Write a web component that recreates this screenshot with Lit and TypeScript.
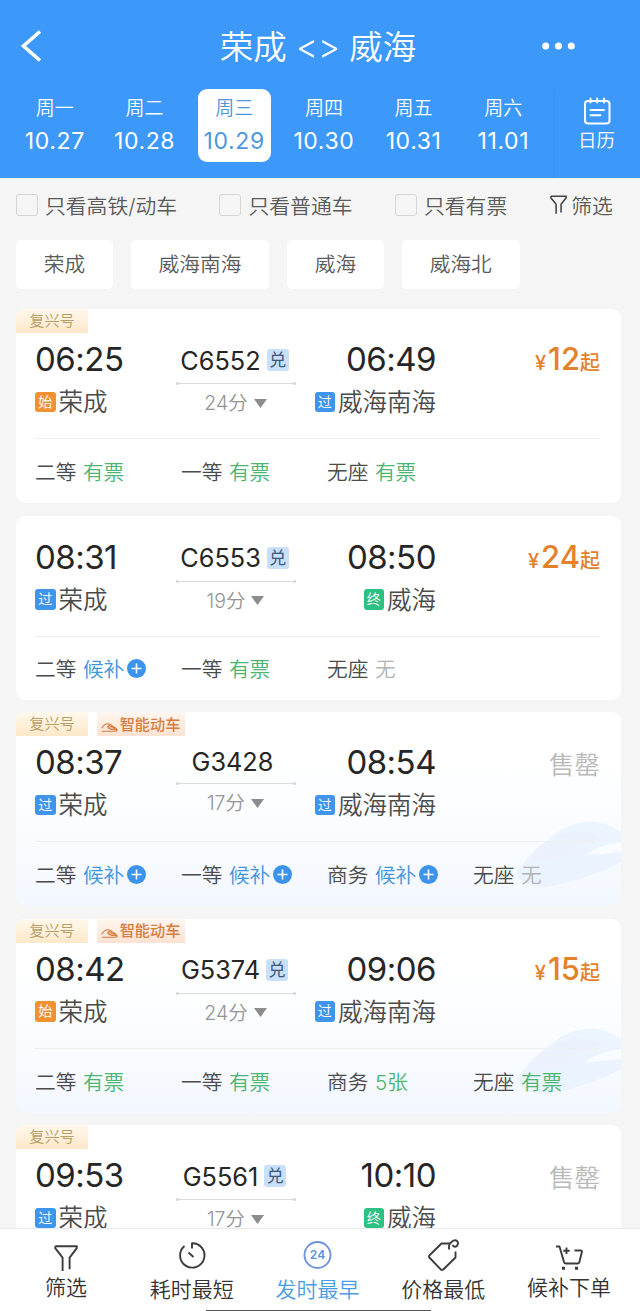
import { LitElement, css, html, svg, nothing } from "lit";
import { customElement, property, state } from "lit/decorators.js";
import { classMap } from "lit/directives/class-map.js";

interface Seat {
  name: string;
  left: string;
}

interface Train {
  no: string;
  tags: string[];
  exchange: boolean;
  depart: string;
  from: string;
  fromMark: string;
  arrive: string;
  to: string;
  toMark: string;
  minutes: number;
  price?: number;
  seats: Seat[];
}

const DAYS = [
  ["周一", "10.27"],
  ["周二", "10.28"],
  ["周三", "10.29"],
  ["周四", "10.30"],
  ["周五", "10.31"],
  ["周六", "11.01"],
];

const STATIONS = ["荣成", "威海南海", "威海", "威海北"];

const TRAINS: Train[] = [
  {
    no: "C6552", tags: ["复兴号"], exchange: true,
    depart: "06:25", from: "荣成", fromMark: "始",
    arrive: "06:49", to: "威海南海", toMark: "过",
    minutes: 24, price: 12,
    seats: [
      { name: "二等", left: "有票" },
      { name: "一等", left: "有票" },
      { name: "无座", left: "有票" },
    ],
  },
  {
    no: "C6553", tags: [], exchange: true,
    depart: "08:31", from: "荣成", fromMark: "过",
    arrive: "08:50", to: "威海", toMark: "终",
    minutes: 19, price: 24,
    seats: [
      { name: "二等", left: "候补" },
      { name: "一等", left: "有票" },
      { name: "无座", left: "无" },
    ],
  },
  {
    no: "G3428", tags: ["复兴号", "智能动车"], exchange: false,
    depart: "08:37", from: "荣成", fromMark: "过",
    arrive: "08:54", to: "威海南海", toMark: "过",
    minutes: 17,
    seats: [
      { name: "二等", left: "候补" },
      { name: "一等", left: "候补" },
      { name: "商务", left: "候补" },
      { name: "无座", left: "无" },
    ],
  },
  {
    no: "G5374", tags: ["复兴号", "智能动车"], exchange: true,
    depart: "08:42", from: "荣成", fromMark: "始",
    arrive: "09:06", to: "威海南海", toMark: "过",
    minutes: 24, price: 15,
    seats: [
      { name: "二等", left: "有票" },
      { name: "一等", left: "有票" },
      { name: "商务", left: "5张" },
      { name: "无座", left: "有票" },
    ],
  },
  {
    no: "G5561", tags: ["复兴号"], exchange: true,
    depart: "09:53", from: "荣成", fromMark: "过",
    arrive: "10:10", to: "威海", toMark: "终",
    minutes: 17,
    seats: [],
  },
];

const funnel = svg`<path d="M1.2 1.2H22.8V3.2L15.6 12.6V24.2M1.2 1.2V3.2L8.6 12.6V26" />`;

@customElement("date-strip")
export class DateStrip extends LitElement {
  static styles = css`
    :host {
      display: flex;
      align-items: center;
      padding-left: 10px;
      height: 73px;
      color: #fff;
    }

    .day {
      display: flex;
      justify-content: center;
      width: 89.7px;
    }

    .box {
      display: flex;
      flex-direction: column;
      align-items: center;
      width: 73px;
      height: 73px;
      border-radius: 9px;
    }

    .box.active {
      background: #fff;
      color: #4d97dc;
    }

    .week {
      margin-top: 5px;
      font-size: 19px;
      line-height: 30px;
    }

    .date {
      font-size: 23px;
      font-weight: 400;
      line-height: 34px;
      letter-spacing: 0.6px;
    }

    .calendar {
      display: flex;
      flex: 1;
      flex-direction: column;
      align-items: center;
      margin-left: 5px;
      height: 89px;
      margin-top: 16px;
      background: linear-gradient(90deg, #3994f5, #3c98f9 4px);
    }

    .calendar svg {
      margin-top: 8px;
    }

    .calendar span {
      font-size: 18.5px;
      line-height: 28px;
      margin-top: 1px;
    }
  `;

  @state() selected = 2;

  render() {
    return html`
      ${DAYS.map(
        ([week, date], i) => html`<div class="day" @click=${() => (this.selected = i)}>
          <div class=${classMap({ box: true, active: i === this.selected })}>
            <span class="week">${week}</span>
            <span class="date">${date}</span>
          </div>
        </div>`
      )}
      <div class="calendar">
        <svg width="28" height="28" viewBox="0 0 28 28" fill="none" stroke="#fff" stroke-width="2" stroke-linecap="round">
          <rect x="2" y="4" width="24.500" height="22.500" rx="3" />
          <path d="M7.500 1.500V5.500M14.200 1.500V5.500M21 1.500V5.500M7.500 13H21M7.500 18.300H17.500" />
        </svg>
        <span>日历</span>
      </div>
    `;
  }
}

@customElement("train-card")
export class TrainCard extends LitElement {
  static styles = css`
    :host {
      display: block;
      flex: none;
    }

    .card {
      position: relative;
      overflow: hidden;
      border-radius: 9px;
      background: #fff;
      color: #4b4b4b;
    }

    .card.smart {
      background: linear-gradient(180deg, #fff 25%, #f9fcff 65%, #f3f7ff);
    }

    .card.plain {
      padding-top: 21px;
    }

    .shade {
      position: absolute;
      right: 0;
      bottom: 14px;
    }

    .tags {
      display: flex;
      gap: 8.5px;
      height: 24px;
      margin-bottom: 6px;
      font-size: 15.2px;
      line-height: 23px;
    }

    .tag {
      width: 72px;
      text-align: center;
      color: #b89c66;
      background: linear-gradient(180deg, #fff8ec, #fde8c9);
    }

    .tag.ai {
      display: flex;
      align-items: center;
      justify-content: center;
      gap: 2px;
      width: 88px;
      font-weight: 500;
      color: #d67c3e;
      background: linear-gradient(180deg, #fff6ef, #fce2d2);
    }

    .tag.ai svg {
      margin-top: 6px;
    }

    .journey {
      position: relative;
      display: flex;
      height: 99px;
      margin: 0 21px 0 19px;
      border-bottom: 1px solid #eeeff1;
    }

    .stop {
      display: flex;
      flex-direction: column;
      width: 141px;
    }

    .stop.end {
      width: 140px;
      align-items: flex-end;
    }

    .time {
      font-size: 33px;
      font-weight: 400;
      line-height: 40px;
      letter-spacing: -0.5px;
      color: #262626;
    }

    .station {
      display: flex;
      align-items: center;
      gap: 3px;
      margin-top: 9px;
      font-size: 24.5px;
      line-height: 28px;
    }

    .mark {
      width: 20.5px;
      height: 20.5px;
      border-radius: 3px;
      font-size: 14px;
      line-height: 20px;
      text-align: center;
      color: #fff;
      background: #3f95ec;
    }

    .mark.first {
      background: #f0922f;
    }

    .mark.last {
      background: #2cc082;
    }

    .middle {
      display: flex;
      flex-direction: column;
      align-items: center;
      width: 120px;
      padding-top: 9px;
    }

    .number {
      display: flex;
      align-items: center;
      gap: 6px;
      height: 21px;
      padding-right: 7px;
      font-size: 25.3px;
      font-weight: 400;
      color: #262626;
    }

    .number.wide {
      height: 24px;
      padding-right: 3px;
    }

    .exchange {
      width: 22px;
      height: 22px;
      border-radius: 3px;
      font-size: 17px;
      line-height: 23px;
      text-align: center;
      color: #3c5878;
      background: #c9e0fb;
    }

    .line {
      display: flex;
      align-items: center;
      justify-content: space-between;
      width: 120px;
      height: 3px;
      margin-top: 10px;
      background: linear-gradient(#dcdcdc, #dcdcdc) center / 100% 1px no-repeat;
    }

    .line i {
      width: 3px;
      height: 3px;
      border-radius: 50%;
      background: #d6d6d6;
    }

    .duration {
      display: flex;
      align-items: center;
      gap: 6px;
      margin-top: 4px;
      padding-right: 1px;
      font-size: 19.5px;
      line-height: 28px;
      color: #949494;
    }

    .price {
      flex: 1;
      text-align: right;
      line-height: 40px;
      font-size: 20px;
      font-weight: 500;
      color: #e4812c;
      white-space: nowrap;
    }

    .price b {
      margin-left: 2px;
      font-size: 31px;
      font-weight: 500;
    }

    .price.none {
      font-size: 25.5px;
      font-weight: 350;
      line-height: 45px;
      color: #b9b9b9;
    }

    .seats {
      position: relative;
      display: flex;
      height: 64px;
      padding-left: 19px;
      font-size: 20.7px;
    }

    .plain .seats {
      height: 63px;
    }

    .seat {
      display: flex;
      align-items: center;
      gap: 6.5px;
      width: 146px;
    }

    .left {
      display: flex;
      align-items: center;
      gap: 2.5px;
      color: #4bb571;
    }

    .left.wait {
      color: #4295dd;
    }

    .left.no {
      color: #b3b3b3;
    }
  `;

  @property({ attribute: false }) train!: Train;

  mark(text: string) {
    return html`<span class=${classMap({ mark: true, first: text === "始", last: text === "终" })}>${text}</span>`;
  }

  tag(text: string) {
    if (text !== "智能动车") return html`<span class="tag">${text}</span>`;
    return html`<span class="tag ai">
      <svg width="17" height="9" viewBox="0 0 17 9" fill="none" stroke="#d67c3e" stroke-width="1.100">
        <path d="M.8 5.200Q3 1 7 .8Q9.500 .9 12 3.600Q16 5.500 16.200 7.200Q16 8.300 14 8.300H.8" />
        <path d="M7 4.800Q6.500 3 8.200 2.600L12 4.200L15 6.800Q10 7 7 4.800Z" fill="#d67c3e" fill-opacity=".45" />
      </svg>${text}</span>`;
  }

  seat({ name, left }: Seat) {
    const wait = left === "候补";
    return html`<div class="seat">
      <span>${name}</span>
      <span class=${classMap({ left: true, wait, no: left === "无" })}>${left}${wait
        ? html`<svg width="19" height="19" viewBox="0 0 19 19">
            <circle cx="9.500" cy="9.500" r="9.500" fill="#3b93ec" />
            <path d="M9.500 4.500V14.500M4.500 9.500H14.500" stroke="#fff" stroke-width="1.600" />
          </svg>`
        : nothing}</span>
    </div>`;
  }

  render() {
    const t = this.train;
    const smart = t.tags.length > 1;
    return html`<div class=${classMap({ card: true, smart, plain: !t.tags.length })}>
      ${smart
        ? html`<svg class="shade" width="105" height="74" viewBox="0 0 105 74">
            <path d="M0 54Q18 30 45 12Q78-6 105 14V24Q80 27 68 38L105 34V44Q72 62 30 69Q4 68 0 54Z" fill="#e2eefe" opacity=".6" />
            <path d="M12 39Q32 17 61 14Q84 14 84 22Q60 25 44 41Q24 45 12 39Z" fill="#ecedfc" opacity=".4" />
          </svg>`
        : nothing}
      ${t.tags.length ? html`<div class="tags">${t.tags.map((x) => this.tag(x))}</div>` : nothing}
      <div class="journey">
        <div class="stop">
          <span class="time">${t.depart}</span>
          <span class="station">${this.mark(t.fromMark)}${t.from}</span>
        </div>
        <div class="middle">
          <div class=${classMap({ number: true, wide: t.exchange })}>
            ${t.no}${t.exchange ? html`<span class="exchange">兑</span>` : nothing}
          </div>
          <div class="line"><i></i><i></i></div>
          <div class="duration">
            ${t.minutes}分
            <svg width="13" height="9" viewBox="0 0 13 9"><path d="M0 0H13L6.500 9Z" fill="#8c8c8c" /></svg>
          </div>
        </div>
        <div class="stop end">
          <span class="time">${t.arrive}</span>
          <span class="station">${this.mark(t.toMark)}${t.to}</span>
        </div>
        ${t.price
          ? html`<div class="price">¥<b>${t.price}</b><span>起</span></div>`
          : html`<div class="price none">售罄</div>`}
      </div>
      <div class="seats">${t.seats.map((s) => this.seat(s))}</div>
    </div>`;
  }
}

@customElement("sort-bar")
export class SortBar extends LitElement {
  static styles = css`
    :host {
      position: relative;
      display: flex;
      flex: none;
      height: 83px;
      padding: 0 8px 0 3px;
      box-sizing: border-box;
      background: #fff;
      border-top: 1px solid #e9e9e9;
      color: #333;
    }

    .item {
      display: flex;
      flex: 1;
      flex-direction: column;
      align-items: center;
      font-size: 21px;
      line-height: 28px;
      white-space: nowrap;
    }

    .item svg {
      margin-top: 8px;
      fill: none;
      stroke: #3c3c3c;
      stroke-width: 1.9;
      stroke-linejoin: round;
    }

    .item span {
      margin-top: -1px;
    }

    .item.active {
      color: #4a9ce6;
    }

    .item.active svg {
      stroke: #6d94de;
    }

    .item.active text {
      fill: #5b8fe0;
      stroke: none;
      font-size: 12px;
      font-weight: 600;
    }

    .raised span {
      margin-top: -3px;
    }

    .home {
      position: absolute;
      left: 206px;
      bottom: 0;
      width: 225px;
      height: 1px;
      background: #555;
    }
  `;

  render() {
    return html`
      <div class="item raised">
        <svg width="34" height="40" viewBox="-5 -8 34 40">${funnel}</svg>
        <span>筛选</span>
      </div>
      <div class="item">
        <svg width="34" height="40" viewBox="0 0 34 40">
          <path d="M9.500 9A12.200 12.200 0 1 0 17 6.200V11.500M13.500 15.500L18.500 20" />
        </svg>
        <span>耗时最短</span>
      </div>
      <div class="item active">
        <svg width="34" height="40" viewBox="0 0 34 40">
          <circle cx="17.500" cy="18" r="13" />
          <text x="17.500" y="22.300" text-anchor="middle">24</text>
        </svg>
        <span>发时最早</span>
      </div>
      <div class="item">
        <svg width="34" height="40" viewBox="0 0 34 40">
          <path d="M24 6.500H15.500L3.300 18.500Q2.300 19.500 3.300 20.500L14.500 32.200Q16 33.500 17.500 32.200L29.500 20.500V14.500" />
          <path d="M23.500 12.500Q21.500 8.500 25.500 5Q29 2 31.500 4.500Q33 7.500 29.800 9.800Q27.500 10 26.500 8" />
        </svg>
        <span>价格最低</span>
      </div>
      <div class="item raised">
        <svg width="34" height="40" viewBox="0 0 34 40">
          <path d="M4 9.500H7.500L12 25Q12.400 26.500 14 26.500H25.500Q27 26.500 27.400 25L30 14.500Q30 13.500 29 13.500H22.500M14.500 10.500V17M11.300 13.700H17.700" />
          <path d="M11.500 29.800V32.800M24.500 29.800V32.800" stroke-width="3" />
        </svg>
        <span>候补下单</span>
      </div>
      <div class="home"></div>
    `;
  }
}

@customElement("app-root")
export class AppRoot extends LitElement {
  static styles = css`
    :host {
      display: flex;
      flex-direction: column;
      height: 1311px;
      overflow: hidden;
      background: #f5f5f5;
      color: #5a5a5a;
      font-family: Inter, "Noto Sans CJK SC", sans-serif;
      font-weight: 350;
    }

    .header {
      flex: none;
      height: 178px;
      background: #3c98f9;
      color: #fff;
    }

    .title {
      display: flex;
      align-items: center;
      justify-content: space-between;
      height: 89px;
      padding: 3px 65px 0 20px;
      box-sizing: border-box;
    }

    .title h1 {
      margin: -4px 0 0 52px;
      font-size: 33.5px;
      font-weight: 350;
      white-space: nowrap;
    }

    .filters {
      display: flex;
      flex: none;
      align-items: center;
      height: 53px;
      padding: 0 0 1px 15.5px;
      font-size: 20.8px;
      white-space: nowrap;
    }

    .check {
      display: flex;
      align-items: center;
      gap: 7.5px;
      margin-right: 42px;
    }

    .check i {
      width: 22px;
      height: 22px;
      box-sizing: border-box;
      border: 1.5px solid #d5d5d5;
      border-radius: 3px;
    }

    .filter {
      display: flex;
      align-items: center;
      gap: 4px;
      margin-left: 1px;
    }

    .chips {
      display: flex;
      flex: none;
      gap: 17.5px;
      height: 49px;
      margin-top: 8px;
      padding-left: 15.7px;
    }

    .chip {
      padding: 0 28px;
      border-radius: 5px;
      background: #fff;
      font-size: 20.7px;
      line-height: 49px;
    }

    .list {
      display: flex;
      flex: 1;
      flex-direction: column;
      gap: 12.5px;
      min-height: 0;
      overflow: hidden;
      margin-top: 20px;
      padding: 0 19px 0 16px;
    }
  `;

  render() {
    return html`
      <div class="header">
        <div class="title">
          <svg width="22" height="32" viewBox="0 0 22 32" fill="none" stroke="#fff" stroke-width="3.600">
            <path d="M20 1.500L3.500 16L20 30.500" />
          </svg>
          <h1>荣成 &lt;&gt; 威海</h1>
          <svg width="33" height="8" viewBox="0 0 33 8" fill="#fff">
            <circle cx="3.700" cy="4" r="3.500" />
            <circle cx="16.500" cy="4" r="3.500" />
            <circle cx="29.300" cy="4" r="3.500" />
          </svg>
        </div>
        <date-strip></date-strip>
      </div>
      <div class="filters">
        <label class="check"><i></i>只看高铁/动车</label>
        <label class="check"><i></i>只看普通车</label>
        <label class="check"><i></i>只看有票</label>
        <div class="filter">
          <svg width="17" height="20" viewBox="0 0 24 27" fill="none" stroke="#444" stroke-width="2.200">${funnel}</svg>
          筛选
        </div>
      </div>
      <div class="chips">${STATIONS.map((s) => html`<span class="chip">${s}</span>`)}</div>
      <div class="list">${TRAINS.map((t) => html`<train-card .train=${t}></train-card>`)}</div>
      <sort-bar></sort-bar>
    `;
  }
}
